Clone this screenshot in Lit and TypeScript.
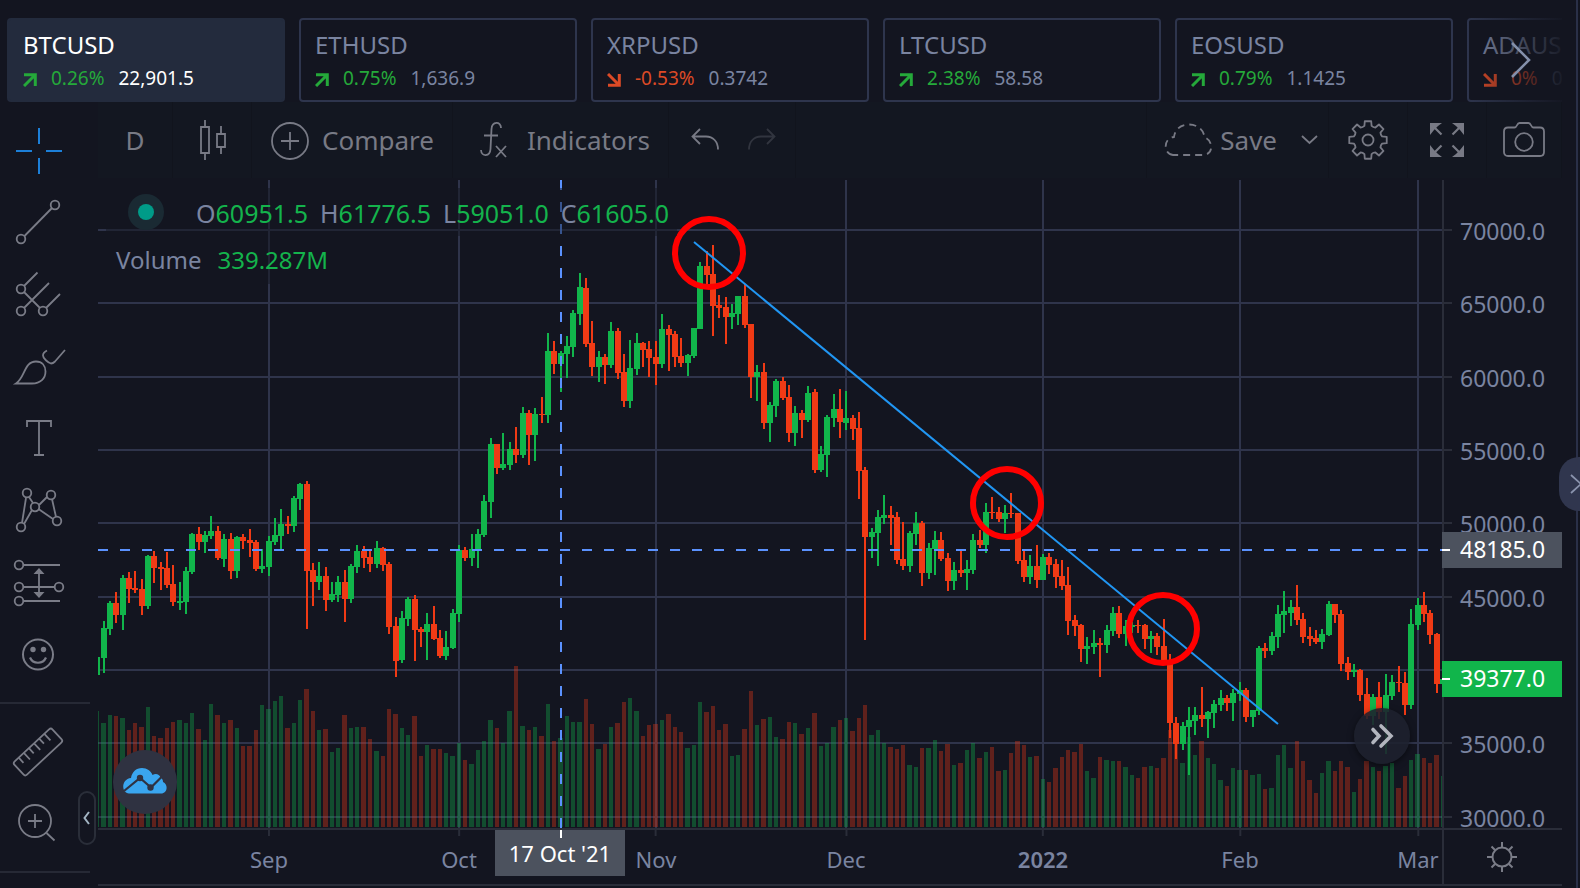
import { LitElement, html, svg, css } from "lit";
import { customElement } from "lit/decorators.js";
import { classMap } from "lit/directives/class-map.js";
import { styleMap } from "lit/directives/style-map.js";

/* ---------- chart data ---------- */

// One candle: direction, then high / body top / body bottom / low.
type Row = [string, number, number, number, number];

// The plot is measured in thirds of a unit from its top edge; each series
// part is stored relative to its own base level.
const shift = (base: number, rows: Row[]): Row[] =>
  rows.map(([d, h, t, b, l]) => [d, h + base, t + base, b + base, l + base]);

const CANDLES: Row[] = [
  ...shift(840, [
    ["g", 591, 591, 645, 645], ["g", 483, 504, 594, 639], ["g", 423, 429, 507, 525], ["r", 396, 429, 465, 489],
    ["g", 345, 354, 465, 510], ["r", 336, 354, 387, 429], ["r", 333, 384, 390, 399], ["r", 357, 387, 438, 465],
    ["g", 285, 288, 438, 447], ["r", 273, 288, 324, 369], ["r", 306, 320, 327, 390], ["r", 276, 324, 375, 384],
    ["r", 315, 372, 426, 438], ["g", 366, 423, 429, 450], ["g", 321, 333, 426, 462], ["g", 219, 222, 336, 342],
    ["r", 201, 222, 246, 270], ["g", 213, 225, 246, 279], ["g", 168, 213, 228, 237], ["r", 198, 213, 294, 300],
    ["g", 222, 237, 297, 321], ["r", 219, 237, 333, 357], ["g", 228, 231, 333, 354], ["r", 222, 231, 243, 267],
    ["r", 207, 240, 249, 291], ["r", 240, 246, 327, 333], ["g", 267, 318, 327, 339], ["g", 228, 243, 321, 348],
    ["g", 174, 225, 246, 255], ["g", 147, 192, 228, 270], ["r", 168, 192, 198, 222], ["g", 108, 114, 198, 216],
    ["g", 69, 72, 117, 150], ["r", 63, 72, 333, 507], ["r", 309, 330, 366, 438], ["g", 306, 348, 366, 390],
    ["r", 321, 348, 420, 453], ["g", 366, 402, 420, 426], ["g", 348, 366, 405, 426], ["r", 330, 366, 417, 486],
    ["g", 312, 318, 417, 429], ["g", 255, 273, 321, 339], ["r", 258, 273, 294, 324], ["r", 273, 291, 312, 336],
    ["g", 243, 264, 312, 324], ["r", 261, 264, 315, 333], ["r", 306, 312, 501, 522], ["r", 471, 498, 603, 651],
    ["g", 453, 474, 600, 609], ["g", 411, 417, 477, 498], ["r", 405, 417, 510, 603], ["r", 501, 507, 516, 561],
    ["g", 459, 492, 516, 600], ["r", 438, 492, 537, 540], ["r", 510, 534, 588, 594], ["g", 513, 561, 588, 600],
  ]),
  ...shift(960, [
    ["g", 327, 339, 444, 447], ["g", 135, 150, 342, 366], ["r", 141, 150, 174, 183], ["g", 102, 147, 174, 198],
    ["g", 87, 102, 150, 204],
  ]),
  ...shift(0, [
    ["g", 945, 963, 1065, 1071], ["g", 774, 792, 966, 1014], ["r", 792, 792, 864, 882], ["g", 759, 852, 864, 870],
    ["g", 786, 807, 855, 870], ["r", 741, 807, 825, 849], ["g", 681, 699, 825, 834], ["r", 690, 699, 765, 855],
    ["g", 684, 702, 765, 843], ["r", 651, 702, 705, 729], ["g", 459, 513, 705, 729], ["r", 483, 513, 552, 582],
    ["g", 513, 519, 552, 636], ["g", 468, 498, 522, 594], ["g", 390, 399, 501, 531], ["g", 279, 321, 402, 435],
    ["r", 294, 324, 492, 501], ["r", 423, 489, 561, 588], ["g", 513, 531, 561, 606], ["r", 522, 531, 555, 612],
    ["g", 426, 453, 555, 564], ["r", 444, 453, 579, 597], ["r", 522, 576, 663, 681], ["g", 480, 564, 663, 684],
    ["g", 459, 489, 567, 585], ["r", 486, 489, 510, 561], ["r", 483, 507, 534, 591], ["r", 483, 531, 552, 615],
    ["g", 402, 447, 552, 564], ["r", 435, 447, 465, 573], ["r", 453, 462, 531, 561], ["r", 474, 528, 549, 561],
    ["g", 522, 525, 549, 588], ["g", 444, 444, 528, 534], ["g", 246, 258, 447, 447], ["r", 213, 258, 285, 315],
    ["r", 195, 282, 378, 468], ["r", 345, 375, 384, 414], ["r", 351, 381, 411, 492], ["g", 372, 399, 411, 447],
    ["g", 348, 348, 402, 435], ["r", 312, 348, 435, 444], ["r", 432, 432, 591, 654], ["g", 555, 576, 591, 663],
  ]),
  ...shift(60, [
    ["r", 489, 516, 669, 687], ["g", 606, 615, 669, 726], ["g", 537, 543, 618, 651], ["r", 531, 543, 594, 600],
    ["r", 555, 591, 699, 726], ["g", 618, 639, 699, 738], ["r", 630, 639, 660, 714], ["g", 558, 579, 660, 666],
    ["r", 567, 576, 810, 819], ["g", 738, 762, 810, 816], ["g", 645, 651, 765, 831], ["g", 582, 627, 654, 681],
    ["r", 567, 627, 666, 714], ["g", 573, 654, 669, 690], ["r", 645, 654, 687, 720], ["r", 636, 684, 813, 897],
    ["r", 801, 810, 1011, 1320], ["g", 984, 996, 1011, 1074], ["g", 930, 951, 999, 1098], ["g", 885, 945, 954, 972],
    ["r", 918, 945, 954, 1035], ["r", 936, 951, 1080, 1092], ["r", 966, 1077, 1098, 1110], ["g", 993, 999, 1098, 1116],
    ["g", 936, 969, 1002, 1035], ["r", 963, 969, 1119, 1158], ["g", 1029, 1044, 1119, 1137], ["g", 993, 1020, 1047, 1125],
    ["r", 996, 1020, 1077, 1083], ["r", 1059, 1074, 1143, 1173], ["g", 1086, 1110, 1143, 1170], ["r", 1050, 1110, 1119, 1131],
    ["g", 1080, 1107, 1119, 1170], ["g", 1002, 1020, 1110, 1122], ["r", 990, 1020, 1035, 1044], ["g", 909, 936, 1035, 1059],
    ["r", 891, 936, 939, 957], ["r", 921, 936, 957, 966], ["g", 915, 939, 957, 999], ["r", 879, 939, 942, 954],
    ["r", 939, 939, 1083, 1092], ["r", 1050, 1080, 1131, 1146], ["g", 1065, 1098, 1131, 1152], ["r", 1035, 1098, 1140, 1164],
    ["g", 1062, 1071, 1140, 1140], ["r", 1059, 1071, 1095, 1122], ["r", 1077, 1092, 1131, 1164], ["r", 1080, 1128, 1158, 1170],
    ["r", 1101, 1155, 1263, 1305],
  ]),
  ...shift(840, [
    ["r", 465, 480, 498, 528], ["r", 492, 495, 567, 606], ["g", 531, 558, 567, 612], ["g", 510, 549, 561, 582],
    ["r", 534, 549, 555, 651], ["g", 495, 510, 555, 579], ["g", 441, 459, 513, 528], ["r", 438, 459, 522, 534],
    ["g", 480, 498, 522, 558], ["g", 486, 495, 500, 520], ["r", 480, 495, 498, 519], ["r", 492, 495, 537, 567],
    ["g", 513, 528, 537, 579], ["r", 519, 528, 561, 585], ["r", 477, 558, 612, 612], ["r", 582, 612, 789, 834],
    ["r", 771, 789, 852, 897], ["g", 786, 798, 852, 870], ["g", 741, 780, 801, 945], ["g", 741, 765, 783, 825],
    ["r", 681, 765, 777, 801], ["g", 753, 756, 777, 834], ["g", 720, 732, 759, 804], ["g", 690, 714, 735, 753],
    ["r", 705, 714, 729, 753], ["g", 687, 699, 729, 783], ["g", 666, 690, 702, 723], ["r", 684, 690, 771, 786],
    ["g", 750, 750, 771, 801], ["g", 558, 564, 753, 765], ["r", 549, 564, 573, 594], ["g", 516, 528, 573, 585],
    ["g", 435, 462, 531, 564], ["g", 393, 453, 465, 519], ["g", 420, 441, 459, 498], ["r", 375, 441, 480, 495],
    ["r", 459, 477, 531, 549], ["r", 501, 528, 537, 558], ["r", 510, 534, 546, 552], ["g", 507, 522, 546, 567],
    ["g", 423, 432, 525, 528], ["r", 432, 432, 465, 489], ["r", 450, 462, 612, 633], ["r", 591, 609, 636, 660],
    ["g", 612, 630, 636, 651],
  ]),
  ...shift(0, [
    ["r", 1467, 1470, 1544, 1563], ["r", 1494, 1542, 1608, 1617], ["g", 1542, 1551, 1608, 1635], ["r", 1506, 1551, 1596, 1617],
    ["g", 1482, 1546, 1596, 1723], ["g", 1485, 1506, 1548, 1560], ["r", 1458, 1506, 1510, 1536], ["r", 1477, 1509, 1575, 1605],
    ["g", 1287, 1332, 1575, 1588], ["g", 1254, 1275, 1336, 1351], ["r", 1235, 1275, 1302, 1326], ["r", 1290, 1299, 1364, 1393],
    ["r", 1359, 1361, 1512, 1539], ["g", 1497, 1497, 1512, 1512],
  ]),
];

const lift = (base: number, tops: number[]) => tops.map((t) => t + base);

const VOLUME_TOPS: number[] = [
  ...lift(840, [
    753, 789, 765, 768, 774, 810, 789, 801, 741, 828, 834, 804, 786, 780, 789, 759, 807, 840, 732, 765,
    789, 780, 804, 858, 858, 810, 735, 747, 723, 708, 804, 789, 720, 687, 753, 810, 807, 876, 864, 765,
    804, 801, 801, 837, 873, 888, 747, 762, 804, 825, 768, 888, 855, 867, 867, 879,
  ]),
  ...lift(960, [
    768, 729, 780, 792, 750, 723, 660, 684, 729, 633, 498, 678, 690, 681, 708, 612, 723, 714, 648, 666,
    666, 597, 672, 747, 732, 681, 669, 606, 594, 633, 708, 675, 672, 660, 642, 681, 696, 744, 735, 606,
    636, 618, 690, 672, 768, 765, 687, 573, 675, 657, 651, 711, 717, 666, 669, 702, 684, 639, 738, 729,
  ]),
  ...lift(1140, [
    501, 480, 474, 513, 474, 435, 525, 510, 549, 561, 567, 555, 615, 621, 564, 564, 540, 573, 552, 615,
    609, 570, 549, 594, 576, 561, 633, 630, 579, 543, 555, 591, 588, 657, 666, 624, 591, 570, 576, 552,
    633, 654, 591, 600, 603, 603, 621, 645, 654, 621, 618, 624, 594, 510, 525, 609, 531, 585,
  ]),
  ...lift(840, [
    843, 894, 912, 960, 978, 924, 930, 930, 945, 942, 987, 984, 885, 855, 924, 843, 903, 960, 999, 939,
    903, 933, 903, 921, 996,
  ]),
  1797, 1743, 1761, 1773, 1757, 1750, 1825, 1788, 1741, 1722, 1734, 1749, 1724, 1788,
];

const PLOT_W = 1344;
const PLOT_H = 648;
const VOLUME_BASE = 647;
const DAY = 6.348;

const dayX = (i: number) => Math.floor(171.1 + DAY * (i - 27));
const priceY = (p: number) => Math.floor(50.3 + ((70000 - p) * 587) / 40000);
const px = (thirds: number) => Math.round(thirds / 3);

const candlePath = (dir: string) =>
  CANDLES.map(([d, h, t, b, l], i) => {
    if (d !== dir) return "";
    const x = dayX(i);
    const top = px(t);
    const bottom = Math.max(px(b), top + 1);
    return `M${x - 1} ${px(h)}h2V${px(l)}h-2zM${x - 3} ${top}h6V${bottom}h-6z`;
  }).join("");

const volumePath = (dir: string) =>
  CANDLES.map(([d], i) => {
    if (d !== dir) return "";
    const x = dayX(i);
    const extra = x - dayX(i - 1) - 6;
    return `M${x - 2 - extra} ${px(VOLUME_TOPS[i])}H${x + 2}V${VOLUME_BASE}H${x - 2 - extra}z`;
  }).join("");

const PRICES = [70000, 65000, 60000, 55000, 50000, 45000, 40000, 35000, 30000];
const MONTHS: { day: number; text: string; strong?: boolean }[] = [
  { day: 27, text: "Sep" },
  { day: 57, text: "Oct" },
  { day: 88, text: "Nov" },
  { day: 118, text: "Dec" },
  { day: 149, text: "2022", strong: true },
  { day: 180, text: "Feb" },
  { day: 208, text: "Mar" },
];

const pctX = (v: number) => `${(v / PLOT_W) * 100}%`;
const pctY = (v: number) => `${(v / PLOT_H) * 100}%`;

/* ---------- ticker strip ---------- */

const TICKERS = [
  { name: "BTCUSD", change: "0.26%", price: "22,901.5", up: true },
  { name: "ETHUSD", change: "0.75%", price: "1,636.9", up: true },
  { name: "XRPUSD", change: "-0.53%", price: "0.3742", up: false },
  { name: "LTCUSD", change: "2.38%", price: "58.58", up: true },
  { name: "EOSUSD", change: "0.79%", price: "1.1425", up: true },
  { name: "ADAUSD", change: "0%", price: "0.5051", up: false },
];

@customElement("ticker-strip")
export class TickerStrip extends LitElement {
  static styles = css`
    :host { display: block; position: relative; overflow: hidden; padding: 18px 0 0 7px; }
    .list { display: flex; gap: 14px; }
    .card {
      flex: 0 0 278px; box-sizing: border-box; font: inherit; text-align: left; color: #7a84a0;
      background: #131520; border: 2px solid #2e354d; border-radius: 4px; padding: 8px 14px 6px; cursor: pointer;
    }
    .card.active { background: #232b3d; border-color: #232b3d; color: #fff; }
    .name { display: block; font-size: 24px; line-height: 34px; }
    .row { display: flex; align-items: center; gap: 14px; font-size: 19px; line-height: 32px; }
    .row svg { width: 14px; height: 14px; fill: none; stroke: currentColor; stroke-width: 3; }
    .arrow { display: flex; padding-top: 3px; }
    .up { color: #25a93a; }
    .down { color: #dc4a26; }
    .next {
      position: absolute; top: 18px; right: 0; bottom: 0; width: 96px; border: 0; padding: 0 30px 0 0;
      display: flex; align-items: center; justify-content: flex-end; color: #8490ab; cursor: pointer;
      background: linear-gradient(to right, rgba(19, 21, 32, 0), rgba(19, 21, 32, 0.93));
    }
    .next svg { width: 22px; height: 38px; fill: none; stroke: currentColor; stroke-width: 2.6; }
  `;

  render() {
    return html`
      <div class="list">
        ${TICKERS.map(
          (t, i) => html`
            <button class=${classMap({ card: true, active: i === 0 })}>
              <span class="name">${t.name}</span>
              <span class="row">
                <span class="arrow ${t.up ? "up" : "down"}">
                  <svg viewBox="0 0 14 14">
                    <path d=${t.up ? "M1 1.7h11.3V13M12 2L1 13" : "M1 12.3h11.3V1M12 12L1 1"}></path>
                  </svg>
                </span>
                <span class=${t.up ? "up" : "down"}>${t.change}</span>
                <span>${t.price}</span>
              </span>
            </button>
          `
        )}
      </div>
      <button class="next" aria-label="Next symbols">
        <svg viewBox="0 0 22 38"><path d="M2 2l17 17L2 36"></path></svg>
      </button>
    `;
  }
}

/* ---------- top toolbar ---------- */

const gearPath = () => {
  const pts: string[] = [];
  for (let i = 0; i < 8; i++) {
    const a = (i * Math.PI) / 4;
    const at = (r: number, d: number) =>
      `${(20 + r * Math.sin(a + d)).toFixed(2)} ${(20 - r * Math.cos(a + d)).toFixed(2)}`;
    pts.push(`${i ? "L" : "M"}${at(14.5, -0.25)}L${at(19, -0.17)}L${at(19, 0.17)}L${at(14.5, 0.25)}`);
    pts.push(`Q${at(13.6, 0.39)} ${at(14.5, 0.535)}`);
  }
  return pts.join("") + "Z";
};

@customElement("chart-toolbar")
export class ChartToolbar extends LitElement {
  static styles = css`
    :host { display: flex; background: #131520; }
    .bar { flex: 1; display: flex; margin-bottom: 2px; background: #131721; }
    button {
      box-sizing: border-box; display: flex; align-items: center; justify-content: center; gap: 12px;
      font: inherit; font-size: 26px; color: #787a85; background: none; border: 0;
      border-right: 1px solid #11141d; padding: 0 18px; cursor: pointer;
    }
    svg { display: block; flex: none; fill: none; stroke: currentColor; stroke-width: 1.8; }
    .cell { width: 79px; padding: 0; }
    .cell.narrow { width: 75px; }
    .history { display: flex; padding: 0 4px 0 8px; }
    .slim { width: 57px; padding: 0; border: 0; }
    .off { opacity: 0.3; }
    .spacer { flex: 1; border-right: 1px solid #11141d; border-left: 1px solid #11141d; }
    .save { gap: 8px; padding: 0 10px 0 17px; }
    .chevron { margin-left: 16px; }
  `;

  render() {
    return html`
      <div class="bar" role="toolbar">
        <button class="cell narrow">D</button>
        <button class="cell" aria-label="Chart style">
          <svg width="40" height="40" viewBox="0 0 40 40" stroke-width="2">
            <path d="M9 7h8v26H9zM13 0v7M13 33v7M25 14h8v13h-8zM29 6v8M29 27v7"></path>
          </svg>
        </button>
        <button>
          <svg width="40" height="40" viewBox="0 0 40 40">
            <circle cx="20" cy="21" r="18"></circle><path d="M11 21h18M20 12v18"></path>
          </svg>
          Compare
        </button>
        <button>
          <svg width="44" height="40" viewBox="0 0 44 40">
            <path d="M30 8c0-7-9-7-9.500 1L19.500 29c-.5 8-9 8-9.500 1M13 15.500h14M25 26l10 11M35 26L25 37"></path>
          </svg>
          Indicators
        </button>
        <div class="history">
          <button class="slim" aria-label="Undo">
            <svg width="28" height="24" viewBox="0 0 28 24"><path d="M9 1L1.500 8.500L9 16M2 8.500h13c7 0 12 5 12 13"></path></svg>
          </button>
          <button class="slim off" aria-label="Redo">
            <svg width="28" height="24" viewBox="0 0 28 24"><path d="M19 1l7.500 7.500L19 16M26 8.500H13C6 8.500 1 13.500 1 21.500"></path></svg>
          </button>
        </div>
        <div class="spacer"></div>
        <button class="save">
          <svg width="48" height="34" viewBox="0 0 48 34" stroke-dasharray="7 5">
            <path d="M9 32c-10-1-10-17 1-18C11 6 17 1.500 25 1.500c9 0 15 6 15.500 13C49 17 50 31 40 32z"></path>
          </svg>
          Save
          <svg class="chevron" width="17" height="10" viewBox="0 0 17 10"><path d="M1 1l7.500 7L16 1"></path></svg>
        </button>
        <button class="cell" aria-label="Settings">
          <svg width="40" height="40" viewBox="0 0 40 40">
            <path d=${gearPath()} stroke-linejoin="round"></path><circle cx="20" cy="20" r="5.500"></circle>
          </svg>
        </button>
        <button class="cell" aria-label="Full screen">
          <svg width="34" height="34" viewBox="0 0 34 34">
            <path d="M2 2l9.500 9.500M32 2l-9.500 9.500M2 32l9.500-9.500M32 32l-9.500-9.500" stroke-width="2.200"></path>
            <path fill="currentColor" stroke="none"
              d="M0 0h12L8 3L4 7L0 12zM34 0H22l4 3l4 4l4 5zM0 34h12l-4-3l-4-4l-4-5zM34 34H22l4-3l4-4l4-5z"></path>
          </svg>
        </button>
        <button class="cell narrow" aria-label="Snapshot">
          <svg width="42" height="36" viewBox="0 0 42 36">
            <path d="M5 5.500h6.500c3 0 2-4.500 5-4.500h9c3 0 2 4.500 5 4.500H37c2.500 0 4 1.500 4 4V30c0 2.500-1.500 4-4 4H5c-2.500 0-4-1.500-4-4V9.500c0-2.500 1.500-4 4-4z"></path>
            <circle cx="21" cy="20" r="8.800"></circle>
          </svg>
        </button>
      </div>
    `;
  }
}

/* ---------- drawing tools ---------- */

const ring = (x: number, y: number) => svg`<circle cx=${x} cy=${y} r="4.3"></circle>`;

const TOOLS = [
  { label: "Cross", top: 115, active: true, art: svg`<path stroke-width="2" d="M39 128v16M39 158v16M16 151h16M46 151h16"/>` },
  { label: "Trend line", top: 187, art: svg`<path d="M24.500 236L52 208"/>${ring(21, 239)}${ring(55, 205)}` },
  {
    label: "Pitchfork", top: 259,
    art: svg`<path d="M24 286L37.500 272.500M24 308L49 283M24 292L40 308M46 308L60 294"/>${ring(21, 289)}${ring(21, 311)}${ring(43, 311)}`,
  },
  {
    label: "Brush", top: 331,
    art: svg`<path d="M16 383.500C25 378 24 361.500 36 361.500c6 0 9.500 4 9.500 10c0 7-5 12-13.500 12zM47 350.500q-4 2-4 5c0 3 5 7 8 8q2 0 4-2L65 350"/>`,
  },
  { label: "Text", top: 403, art: svg`<path d="M27 427v-6h24v6M39 421v34M34 455h10"/>` },
  {
    label: "Patterns", top: 475,
    art: svg`<path d="M26 498L22 523M29 497L33 503M32 510L24 524M39 505L47 497M38.500 509L53 519M52 499L56 517"/>${ring(27, 493)}${ring(51, 495)}${ring(35, 507)}${ring(21, 527)}${ring(57, 521)}`,
  },
  {
    label: "Forecast", top: 547,
    art: svg`<path d="M23.500 565H60M23.500 587H55M23.500 601H60M39 571V595"/><path fill="currentColor" stroke="none" d="M39 568l5.500 6h-11zM39 598l5.500-6h-11z"/>${ring(19, 565)}${ring(19, 587)}${ring(59, 587)}${ring(19, 601)}`,
  },
  {
    label: "Icons", top: 619,
    art: svg`<circle stroke-width="2" cx="38" cy="654.500" r="15"/><path stroke-width="2.200" d="M30 657.500c3 7 13 7 16 0"/><circle fill="currentColor" stroke="none" cx="33" cy="649.500" r="2.700"/><circle fill="currentColor" stroke="none" cx="43.500" cy="649.500" r="2.700"/>`,
  },
];

const UTILITIES = [
  {
    label: "Measure", top: 716,
    art: svg`<g transform="rotate(-43 38 752)"><rect x="12" y="743" width="52" height="18" rx="2.500"/><path d="M20 743v7M27 743v9M34 743v7M41 743v9M48 743v7M55 743v9"/></g>`,
  },
  { label: "Zoom in", top: 788, art: svg`<circle cx="35" cy="821" r="16"/><path d="M28 821h14M35 814v14M46.500 833l8 7.500"/>` },
];

@customElement("drawing-tools")
export class DrawingTools extends LitElement {
  static styles = css`
    :host { display: flex; flex-direction: column; position: relative; padding-top: 13px; }
    .tool { display: block; height: 72px; padding: 0; border: 0; background: none; color: #7a7c87; cursor: pointer; }
    .tool.active { color: #1c7fd8; }
    .tool svg { display: block; width: 80px; height: 72px; fill: none; stroke: currentColor; stroke-width: 1.8; }
    hr { width: 90px; height: 2px; margin: 11px 0 12px; border: 0; background: #262935; }
    .collapse {
      position: absolute; right: 2px; bottom: 41px; width: 18px; height: 54px; padding: 0 2px 0 0;
      box-sizing: border-box; display: flex; align-items: center; justify-content: center;
      border: 2px solid #2a2e39; border-radius: 9px; background: #131520; color: #a3b5c4; cursor: pointer;
    }
    .collapse svg { width: 7px; height: 14px; fill: none; stroke: currentColor; stroke-width: 2; }
  `;

  private tool(t: { label: string; top: number; art: unknown; active?: boolean }) {
    return html`
      <button class=${classMap({ tool: true, active: !!t.active })} aria-label=${t.label}>
        <svg viewBox="0 ${t.top} 80 72">${t.art}</svg>
      </button>
    `;
  }

  render() {
    return html`
      ${TOOLS.map((t) => this.tool(t))}
      <hr />
      ${UTILITIES.map((t) => this.tool(t))}
      <hr />
      <button class="collapse" aria-label="Hide drawing tools">
        <svg viewBox="0 0 7 14"><path d="M6 1L1.500 7L6 13"></path></svg>
      </button>
    `;
  }
}

/* ---------- chart ---------- */

@customElement("price-chart")
export class PriceChart extends LitElement {
  static styles = css`
    :host { display: grid; grid-template: minmax(0, 1fr) 58px / minmax(0, 1fr) 120px; color: #7a84a0; }
    .plot { position: relative; overflow: hidden; }
    .canvas { position: absolute; inset: 0; width: 100%; height: 100%; display: block; }
    .grid { fill: none; stroke: #2f344b; stroke-width: 2; }
    .vol-g { fill: rgba(16, 183, 78, 0.35); }
    .vol-r { fill: rgba(240, 58, 22, 0.35); }
    .g { fill: #11b54b; }
    .r { fill: #f03a15; }
    .cross { fill: none; stroke: #5b92ff; stroke-width: 2; stroke-dasharray: 10 12; }
    .trend { stroke: #2196f3; stroke-width: 2; }
    .mark { fill: none; stroke: #f00; stroke-width: 6; }

    .legend {
      position: relative; display: flex; flex-direction: column; align-items: flex-start;
      padding: 8px 0 0 8px; white-space: nowrap;
    }
    .line { display: flex; height: 48px; background: rgba(19, 21, 32, 0.5); }
    .ohlc { gap: 12px; padding: 0 8px 0 0; font-size: 25px; line-height: 51px; }
    .status {
      width: 36px; height: 36px; margin: 6px 20px 0 22px; border-radius: 50%; background: #1a2a33;
      display: flex; align-items: center; justify-content: center;
    }
    .status::after { content: ""; width: 16px; height: 16px; border-radius: 50%; background: #009b88; }
    .volume { gap: 16px; padding: 0 8px 0 10px; font-size: 24px; line-height: 48px; }
    .value { color: #14b34c; }

    .logo {
      position: absolute; left: 15px; bottom: 14px; width: 64px; height: 64px; border-radius: 50%;
      background: #2f3241; display: flex; align-items: center; justify-content: center;
    }
    .logo svg { width: 44px; height: 26px; padding-bottom: 2px; }
    .latest {
      position: absolute; right: 32px; bottom: 64px; width: 56px; height: 56px; border: 0; padding: 0;
      border-radius: 50%; background: rgba(30, 33, 45, 0.88); box-shadow: 0 2px 6px rgba(0, 0, 0, 0.5);
      display: flex; align-items: center; justify-content: center; color: #b2b5be; cursor: pointer;
    }
    .latest svg { width: 24px; height: 26px; fill: none; stroke: currentColor; stroke-width: 3.6; stroke-linecap: round; }

    .prices { position: relative; border-left: 2px solid #2a2d39; font-size: 23px; }
    .price {
      position: absolute; left: 0; right: 0; height: 36px; line-height: 38px; padding-left: 16px;
      transform: translateY(-50%);
    }
    .price::before {
      content: ""; position: absolute; left: 0; top: 17px; width: 8px; height: 2px; background: #2a2d39;
    }
    .tag { left: -2px; padding-left: 18px; line-height: 34px; color: #fff; background: #4c525e; }
    .tag.last { background: #11b54b; }
    .tag::before { background: #fff; }

    .times { position: relative; border: solid #2a2d39; border-width: 2px 0; font-size: 22px; }
    .time { position: absolute; top: 0; line-height: 58px; transform: translateX(-50%); }
    .time.strong { font-weight: 600; }
    .time::before {
      content: ""; position: absolute; left: 50%; top: 0; width: 2px; height: 6px; margin-left: -1px; background: #2a2d39;
    }
    .time.cursor { width: 130px; height: 46px; line-height: 46px; text-align: center; color: #fff; background: #4c525e; }
    .time.cursor::before { height: 8px; margin-left: 0; background: #fff; }
    .corner {
      box-sizing: border-box; border: 2px solid #2a2d39; border-right: 0; padding: 0 2px 0 0; background: none; color: #7a7c87;
      display: flex; align-items: center; justify-content: center; cursor: pointer;
    }
    .corner svg { width: 32px; height: 32px; fill: none; stroke: currentColor; stroke-width: 2; }
  `;

  private plot() {
    const rows = PRICES.map((p) => `M0 ${priceY(p)}H${PLOT_W}`).join("");
    const cols = MONTHS.map((m) => `M${dayX(m.day)} 0V${PLOT_H}`).join("");
    return html`
      <svg class="canvas" viewBox="0 0 ${PLOT_W} ${PLOT_H}" preserveAspectRatio="none" role="img" aria-label="BTCUSD daily candles">
        <path class="grid" d=${rows + cols}></path>
        <path class="vol-g" d=${volumePath("g")}></path>
        <path class="vol-r" d=${volumePath("r")}></path>
        <path class="g" d=${candlePath("g")}></path>
        <path class="r" d=${candlePath("r")}></path>
        <path class="cross" d="M0 370H${PLOT_W}"></path>
        <path class="cross" d="M463 0V${PLOT_H}"></path>
        <path class="trend" d="M596 62L1180 544"></path>
        <circle class="mark" cx="611" cy="73" r="34"></circle>
        <circle class="mark" cx="909" cy="323" r="34"></circle>
        <circle class="mark" cx="1065" cy="449" r="34"></circle>
      </svg>
    `;
  }

  render() {
    return html`
      <div class="plot">
        ${this.plot()}
        <div class="legend">
          <div class="line ohlc">
            <span class="status"></span>
            ${[["O", "60951.5"], ["H", "61776.5"], ["L", "59051.0"], ["C", "61605.0"]].map(
              ([k, v]) => html`<span>${k}<span class="value">${v}</span></span>`
            )}
          </div>
          <div class="line volume"><span>Volume</span><span class="value">339.287M</span></div>
        </div>
        <div class="logo">
          <svg viewBox="0 0 44 26">
            <path fill="#3aa6ef" d="M6 25.500C-2 25-2 11 8 10C9 4 13 0 19 0c5 0 9 3 10.500 7c3-2 7-1 8 2.500C40 11 40 13 40 14c6 3 4 11.500-2 11.500z"></path>
            <path fill="none" stroke="#2f3241" stroke-width="2.200" d="M1 23L17 10L28 19.500L39 8.500"></path>
            <circle fill="#2f3241" cx="17" cy="10" r="3.200"></circle><circle fill="#2f3241" cx="27.500" cy="19.500" r="3.200"></circle>
          </svg>
        </div>
        <button class="latest" aria-label="Scroll to the latest bar">
          <svg viewBox="0 0 24 26"><path d="M3 6.500L9 13L3 19.500M11 3L21 13L11 23"></path></svg>
        </button>
      </div>
      <div class="prices">
        ${PRICES.filter((p) => p !== 40000).map(
          (p) => html`<div class="price" style=${styleMap({ top: pctY(priceY(p)) })}>${p.toFixed(1)}</div>`
        )}
        <div class="price tag" style=${styleMap({ top: pctY(370) })}>48185.0</div>
        <div class="price tag last" style=${styleMap({ top: pctY(499) })}>39377.0</div>
      </div>
      <div class="times">
        ${MONTHS.map(
          (m) => html`
            <div class=${classMap({ time: true, strong: !!m.strong })} style=${styleMap({ left: pctX(dayX(m.day)) })}>${m.text}</div>
          `
        )}
        <div class="time cursor" style=${styleMap({ left: pctX(462) })}>17 Oct '21</div>
      </div>
      <button class="corner" aria-label="Scale settings">
        <svg viewBox="0 0 32 32">
          <circle cx="16" cy="16" r="9.500"></circle>
          <path d="M16 1v5M16 26v5M1 16h5M26 16h5M5.500 5.500l3.500 3.500M23 23l3.500 3.500M5.500 26.500l3.500-3.500M23 9l3.500-3.500"></path>
        </svg>
      </button>
    `;
  }
}

/* ---------- page ---------- */

@customElement("app-root")
export class AppRoot extends LitElement {
  static styles = css`
    :host {
      display: flex; position: relative; height: 100vh; overflow: hidden; background: #131520;
      font-family: "Noto Sans", "Open Sans", sans-serif;
    }
    .main { flex: 1; min-width: 0; display: flex; flex-direction: column; padding-right: 14px; }
    .rail { width: 2px; background: #2a3048; margin-right: 2px; }
    .work {
      flex: 1; min-height: 0; display: grid; padding-bottom: 2px;
      grid-template: 78px minmax(0, 1fr) / 98px minmax(0, 1fr);
    }
    .tools { grid-row: 1 / 3; }
    .open {
      position: absolute; right: -33px; top: 457px; width: 54px; height: 54px; border: 0; border-radius: 20px;
      padding: 0 0 0 11px; display: flex; align-items: center; background: #30364e; color: #8a93ad; cursor: pointer;
    }
    .open svg { width: 12px; height: 20px; fill: none; stroke: currentColor; stroke-width: 1.8; }
  `;

  render() {
    return html`
      <main class="main">
        <ticker-strip></ticker-strip>
        <div class="work">
          <drawing-tools class="tools"></drawing-tools>
          <chart-toolbar></chart-toolbar>
          <price-chart></price-chart>
        </div>
      </main>
      <div class="rail"></div>
      <button class="open" aria-label="Open side panel">
        <svg viewBox="0 0 12 20"><path d="M1 1l10 9L1 19"></path></svg>
      </button>
    `;
  }
}
